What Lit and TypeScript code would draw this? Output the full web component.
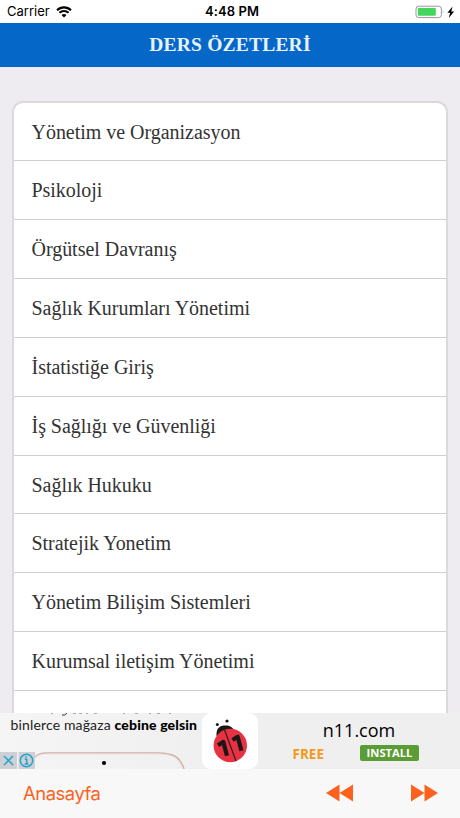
import { LitElement, html, css, svg } from "lit";
import { customElement } from "lit/decorators.js";

const LESSONS = [
  "Yönetim ve Organizasyon",
  "Psikoloji",
  "Örgütsel Davranış",
  "Sağlık Kurumları Yönetimi",
  "İstatistiğe Giriş",
  "İş Sağlığı ve Güvenliği",
  "Sağlık Hukuku",
  "Stratejik Yonetim",
  "Yönetim Bilişim Sistemleri",
  "Kurumsal iletişim Yönetimi",
];

@customElement("status-bar")
class StatusBar extends LitElement {
  static styles = css`
    :host {
      display: grid;
      grid-template-columns: 1fr auto 1fr;
      align-items: center;
      height: 23px;
      background: #fff;
      color: #000;
      font: 13px/23px Inter, "Liberation Sans", sans-serif;
    }
    .left { display: flex; align-items: center; gap: 6px; padding-left: 7px; height: 23px; }
    .time { font-weight: 600; font-size: 13px; letter-spacing: 0.1px; padding-left: 4px; }
    .right { display: flex; justify-content: flex-end; align-items: center; padding-right: 5px; }
    svg { display: block; }
  `;
  render() {
    return html`
      <div class="left">
        <span>Carrier</span>
        <svg width="16" height="12" viewBox="0 0 16 12">
          <path d="M1 4.2a10 10 0 0 1 14 0M3.4 6.8a6.6 6.6 0 0 1 9.2 0" fill="none" stroke="#000" stroke-width="2.1" />
          <path d="M8 11.6 5.5 9.1a3.6 3.6 0 0 1 5 0Z" />
        </svg>
      </div>
      <div class="time">4:48 PM</div>
      <div class="right">
        <svg width="40" height="14" viewBox="0 0 40 14">
          <rect x="1" y="1.2" width="25.4" height="11.4" rx="2.8" fill="#fff" stroke="#999" />
          <rect x="2.8" y="3" width="18" height="7.8" rx="0.8" fill="#43d65d" />
          <path d="M27.8 5.2q1.3 1.7 0 3.4Z" fill="#999" />
          <path d="M37.5 1.5 32.4 7.7h2.7L33.8 12.9l5.3-6.4h-2.8Z" />
        </svg>
      </div>
    `;
  }
}

@customElement("lesson-list")
class LessonList extends LitElement {
  static styles = css`
    :host { display: block; padding: 33.5px 12px 0; }
    ul {
      margin: 0;
      padding: 0;
      list-style: none;
      background: #fff;
      border: 2px solid #dad9dc;
      border-bottom: 0;
      border-radius: 11px 11px 0 0;
    }
    li {
      box-sizing: border-box;
      height: 58.9px;
      padding-left: 17.5px;
      border-bottom: 1.5px solid #cfced0;
      color: #333;
      font: 20px/58px "Liberation Serif", serif;
      letter-spacing: -0.03px;
    }
    li:first-child { height: 58.65px; }
    li:last-child { border: 0; }
  `;
  render() {
    return html`<ul>${LESSONS.map((name) => html`<li>${name}</li>`)}<li></li></ul>`;
  }
}

@customElement("ad-banner")
class AdBanner extends LitElement {
  static styles = css`
    :host {
      display: flex;
      position: relative;
      height: 56px;
      background: linear-gradient(90deg, #f5f5f5, #efefef 50%, #efefef);
      color: #000;
    }
    .creative { width: 202px; }
    .slogan { display: block; margin: 2px 0 0 10.5px; font: 14px/19px Lato, sans-serif; letter-spacing: 0.15px; white-space: nowrap; color: #222; }
    .slogan b { color: #000; font-weight: 900; }
    .art { position: absolute; left: 0; top: 0; }
    .logo { width: 56px; height: 56px; display: block; }
    .offer { flex: 1; display: flex; flex-direction: column; align-items: center; }
    .name { font: 18px/25px "Open Sans", sans-serif; margin-top: 5px; }
    .actions { align-self: flex-start; display: flex; align-items: flex-start; gap: 36px; margin-top: 2px; padding-left: 34.5px; }
    .free { width: 31.5px; color: #f39a1b; font: 700 13.5px/16px "Open Sans", sans-serif; margin-top: 1px; }
    .install {
      width: 59px; height: 16px; border-radius: 2px; background: #5b9c34; color: #fff;
      text-align: center; font: 700 11.2px/15px "Open Sans", sans-serif;
    }
  `;
  render() {
    return html`
      <div class="creative"><span class="slogan">binlerce mağaza <b>cebine gelsin</b></span></div>
      <svg class="art" width="202" height="56" viewBox="0 0 202 56">
        <path d="M35 44C38 41 41 40 46 40H158C174 40 180 44 184 56" fill="none" stroke="#c9b4aa" stroke-width="1.6" />
        <path d="M35 45C38 42 41 41 46 41H158C173 41 179 45 183 56" fill="none" stroke="#f2ded5" stroke-width="1" />
        <circle cx="104" cy="50" r="2.1" />
        <path d="M51 .5h2M73 .5h3M79 .5h3M86 .5h2M94 .5h3M123 .5h2M135 .5h3M149 .5h2M157 .5h3M169 .5h2" stroke="#aaa" />
        <path d="M67 0Q65 3 62 2" fill="none" stroke="#333" />
        <path d="M0 39H17V56H0ZM18.5 39H35V56H18.5Z" fill="#cfd0d5" />
        <g fill="none" stroke="#24a5c8" stroke-width="1.5">
          <path d="m4 43 9 9m0-9-9 9" />
          <circle cx="26.5" cy="47.5" r="6.2" />
          <path d="M24.8 46.2h1.9v4.8M24.6 51h4M26 43.2v1.6" />
        </g>
      </svg>
      <svg class="logo" viewBox="0 0 56 56">
        <rect width="56" height="56" rx="9" fill="#fff" />
        <g fill="#1d1718">
          <circle cx="15.3" cy="11.5" r="1.5" />
          <circle cx="25" cy="8" r="1.6" />
          <path d="M14.5 23C14 16 17 13 22 12.5C27 12 31 14 32.5 18Z" />
        </g>
        <circle cx="28.3" cy="32.5" r="16.7" fill="#e83242" />
        <path d="M22.5 16.7 34 48" stroke="#351b20" stroke-width="1.2" />
        <path d="m16 32.2 5.3-3.3L25 42.8M30.5 27l5.2-3.3L39.4 37.8" fill="none" stroke="#1d1718" stroke-width="4.2" stroke-linejoin="round" />
      </svg>
      <div class="offer">
        <div class="name">n11.com</div>
        <div class="actions"><span class="free">FREE</span><span class="install">INSTALL</span></div>
      </div>
    `;
  }
}

@customElement("app-root")
class AppRoot extends LitElement {
  static styles = css`
    :host { display: flex; flex-direction: column; width: 460px; height: 818px; overflow: hidden; background: #eeecf0; }
    header {
      height: 44px; background: #0567c8; color: #e8f2ff; text-align: center;
      font: 700 19.5px/44px "Liberation Serif", serif; letter-spacing: 0.2px;
    }
    main { flex: 1; min-height: 0; overflow: hidden; }
    footer { box-sizing: border-box; height: 49px; background: #f8f8f8; display: flex; align-items: center; padding: 0 22px 0 23px; color: #fc621d; }
    .home { flex: 1; font: 18.4px/49px Inter, sans-serif; letter-spacing: -0.45px; }
    .nav { display: flex; gap: 56px; padding-bottom: 2px; }
    .nav svg { display: block; }
  `;
  render() {
    const arrows = (d: string) => html`<svg width="28" height="18" viewBox="0 0 28 18">${svg`<path d=${d} fill="#fc621d" />`}</svg>`;
    return html`
      <status-bar></status-bar>
      <header>DERS ÖZETLERİ</header>
      <main><lesson-list></lesson-list></main>
      <ad-banner></ad-banner>
      <footer>
        <span class="home">Anasayfa</span>
        <div class="nav">${arrows("M0 9 13.5.5v17ZM13.5 9 27 .5v17Z")}${arrows("M28 9 14.5.5v17ZM14.5 9 1 .5v17Z")}</div>
      </footer>
    `;
  }
}
